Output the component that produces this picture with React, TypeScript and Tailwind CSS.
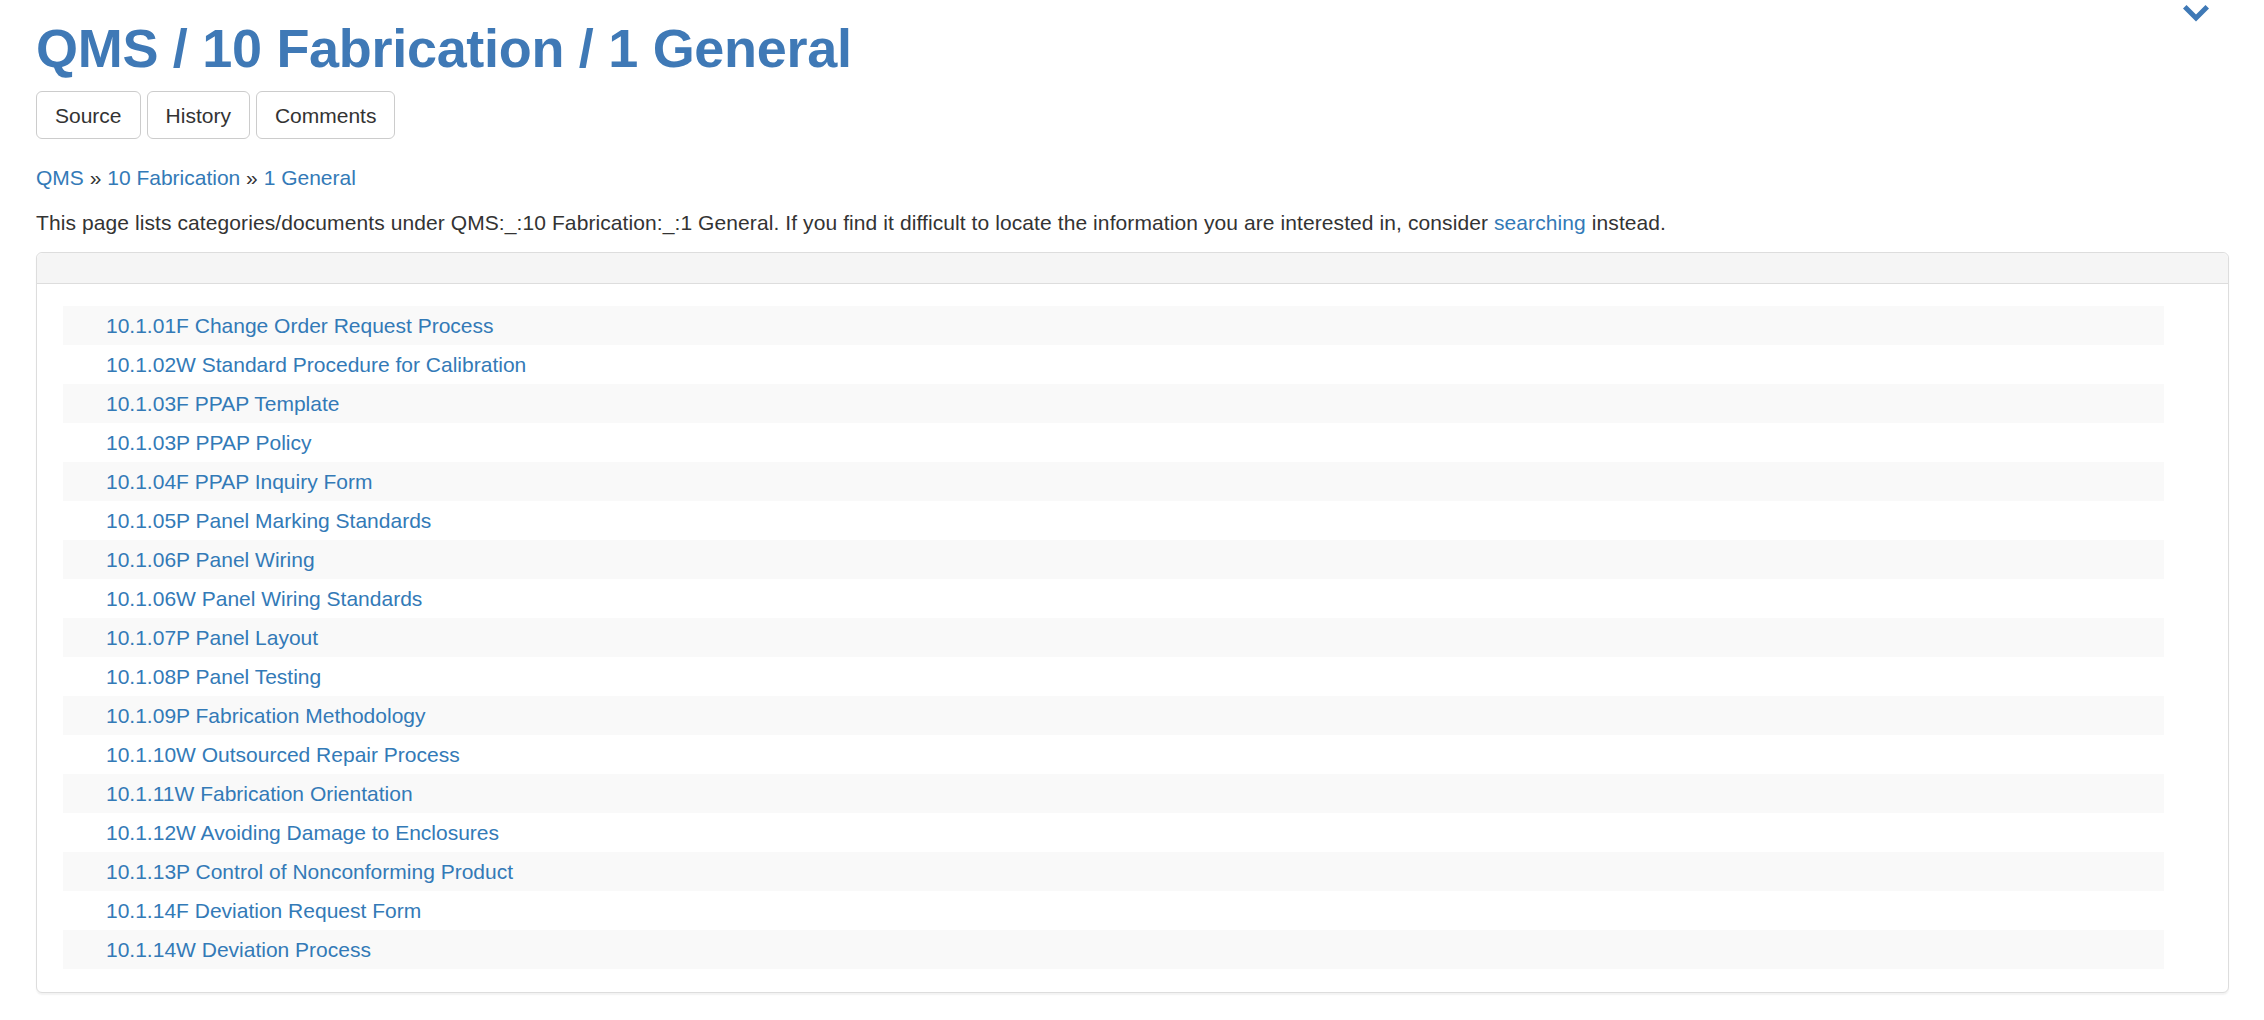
import React from "react";

const items = [
  "10.1.01F Change Order Request Process",
  "10.1.02W Standard Procedure for Calibration",
  "10.1.03F PPAP Template",
  "10.1.03P PPAP Policy",
  "10.1.04F PPAP Inquiry Form",
  "10.1.05P Panel Marking Standards",
  "10.1.06P Panel Wiring",
  "10.1.06W Panel Wiring Standards",
  "10.1.07P Panel Layout",
  "10.1.08P Panel Testing",
  "10.1.09P Fabrication Methodology",
  "10.1.10W Outsourced Repair Process",
  "10.1.11W Fabrication Orientation",
  "10.1.12W Avoiding Damage to Enclosures",
  "10.1.13P Control of Nonconforming Product",
  "10.1.14F Deviation Request Form",
  "10.1.14W Deviation Process",
];

export default function App() {
  return (
    <div className="relative min-h-screen bg-white font-['Liberation_Sans',Arial,sans-serif] text-[#333333] pl-[36px] pr-[35px] pt-[19px] pb-[28px]">
      <button className="absolute top-[2px] right-[55px] w-[26px] h-[22px] flex items-center justify-center" aria-label="toggle">
        <svg width="26" height="20" viewBox="0 0 26 20">
          <polyline points="3.5,5.5 13,15 22.5,5.5" fill="none" stroke="#3f79b6" strokeWidth="5" strokeLinecap="square" />
        </svg>
      </button>

      <h1 className="text-[54px] leading-[59.4px] font-bold tracking-[-0.3px] text-[#3f79b6]">
        QMS / 10 Fabrication / 1 General
      </h1>

      <div className="mt-[13px] flex gap-[6px]">
        {["Source", "History", "Comments"].map((b) => (
          <button
            key={b}
            className="h-[48px] px-[18px] flex items-center border border-[#cccccc] rounded-[6px] bg-white text-[21px] text-[#333333]"
          >
            {b}
          </button>
        ))}
      </div>

      <div className="mt-[24px] text-[21px] leading-[30px]">
        <a className="text-[#337ab7]">QMS</a>
        <span> » </span>
        <a className="text-[#337ab7]">10 Fabrication</a>
        <span> » </span>
        <a className="text-[#337ab7]">1 General</a>
      </div>

      <p className="mt-[15px] text-[21px] leading-[30px] tracking-[0.09px]">
        This page lists categories/documents under QMS:_:10 Fabrication:_:1 General. If you find it difficult to locate the information you are interested in, consider{" "}
        <a className="text-[#337ab7]">searching</a> instead.
      </p>

      <div className="mt-[14px] border border-[#dddddd] rounded-[6px] bg-white shadow-[0_1.5px_1.5px_rgba(0,0,0,0.05)]">
        <div className="h-[31px] bg-[#f5f5f5] border-b border-[#dddddd] rounded-t-[6px]"></div>
        <div className="pl-[26px] pr-[64px] pt-[22px] pb-[23px]">
          <ul>
            {items.map((it) => (
              <li
                key={it}
                className="h-[39px] leading-[39px] pl-[43px] text-[21px] odd:bg-[#f9f9f9]"
              >
                <a className="text-[#337ab7]">{it}</a>
              </li>
            ))}
          </ul>
        </div>
      </div>
    </div>
  );
}
